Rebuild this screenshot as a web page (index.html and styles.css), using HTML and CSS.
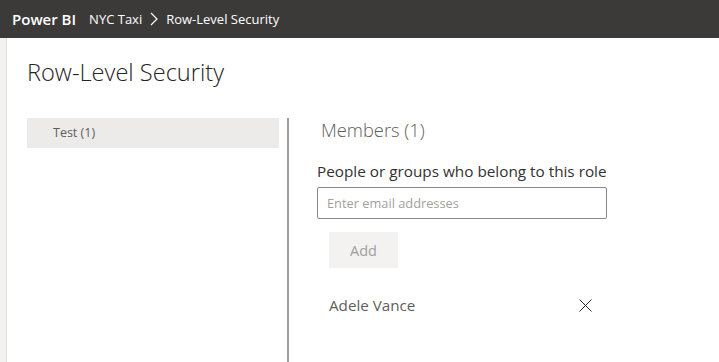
FILE: index.html
```html
<!DOCTYPE html>
<html lang="en">
<head>
  <meta charset="UTF-8" />
  <title>Row-Level Security</title>
  <link rel="stylesheet" href="styles.css">
</head>
<body>

<header class="topbar">
  <span class="brand">Power BI</span>
  <span class="crumb">NYC Taxi</span>
  <svg class="chevron" width="8" height="14" viewBox="0 0 8 14">
    <path d="M1 1 L7 7 L1 13" fill="none" stroke="#fff" stroke-width="1.2" />
  </svg>
  <span class="crumb">Row-Level Security</span>
</header>

<div class="page">
  <div class="rail"></div>
  <main class="content">
    <h1 class="title">Row-Level Security</h1>

    <div class="panes">
      <div class="roles">
        <div class="role selected">Test (1)</div>
      </div>

      <div class="divider"></div>

      <section class="members">
        <h2>Members (1)</h2>
        <label class="field-label" for="email">People or groups who belong to this role</label>
        <input type="text" id="email" placeholder="Enter email addresses" />
        <button class="add-btn" disabled>Add</button>

        <div class="member">
          <span class="member-name">Adele Vance</span>
          <svg class="remove" width="13" height="13" viewBox="0 0 13 13">
            <path d="M0.5 0.5 L12.5 12.5 M12.5 0.5 L0.5 12.5" stroke="#323130" stroke-width="1" />
          </svg>
        </div>
      </section>
    </div>
  </main>
</div>

</body>
</html>
```

FILE: styles.css
```css
* {
  margin: 0;
  padding: 0;
  box-sizing: border-box;
  font-family: "Open Sans", "Noto Sans", sans-serif;
}

body {
  width: 719px;
  height: 362px;
  overflow: hidden;
  background: #fff;
  color: #323130;
}

/* Top bar */
.topbar {
  height: 38px;
  background: #3b3a39;
  display: flex;
  align-items: center;
  padding-left: 12px;
  color: #fff;
}

.brand {
  font-size: 15px;
  font-weight: 600;
  margin-right: 13px;
}

.crumb {
  font-size: 13px;
}

.chevron {
  margin: 0 8px 0 8px;
}

/* Page body */
.page {
  display: flex;
  height: 324px;
}

.rail {
  width: 7px;
  background: #f3f2f1;
  border-right: 1px solid #e1dfdd;
}

.content {
  flex: 1;
  padding-left: 20px;
}

.title {
  font-size: 23.6px;
  font-weight: 300;
  color: #252423;
  margin-top: 18px;
  height: 62px;
  line-height: 32px;
}

.panes {
  display: flex;
  height: 244px;
}

.roles {
  width: 252px;
}

.role {
  height: 30px;
  line-height: 30px;
  padding-left: 26px;
  font-size: 12.5px;
  color: #605e5c;
}

.role.selected {
  background: #edebe9;
}

.divider {
  width: 2px;
  background: #a19f9d;
  margin-left: 8px;
}

.members {
  padding-left: 28px;
  display: flex;
  flex-direction: column;
  align-items: flex-start;
}

.members h2 {
  font-size: 18.3px;
  font-weight: 300;
  color: #605e5c;
  margin-left: 4px;
  line-height: 24px;
}

.field-label {
  font-size: 15.3px;
  margin-top: 19px;
  line-height: 21px;
  color: #323130;
}

input {
  width: 290px;
  height: 32px;
  margin-top: 5px;
  border: 1px solid #8a8886;
  border-radius: 2px;
  padding: 0 9px;
  font-size: 12.8px;
  color: #323130;
  outline: none;
}

input::placeholder {
  color: #a19f9d;
}

.add-btn {
  margin: 13px 0 0 12px;
  width: 69px;
  height: 36px;
  background: #f3f2f1;
  border: none;
  color: #a19f9d;
  font-size: 14.5px;
}

.member {
  display: flex;
  align-items: center;
  width: 263px;
  justify-content: space-between;
  margin: 27px 0 0 12px;
}

.member-name {
  font-size: 15.2px;
  color: #605e5c;
}
```
